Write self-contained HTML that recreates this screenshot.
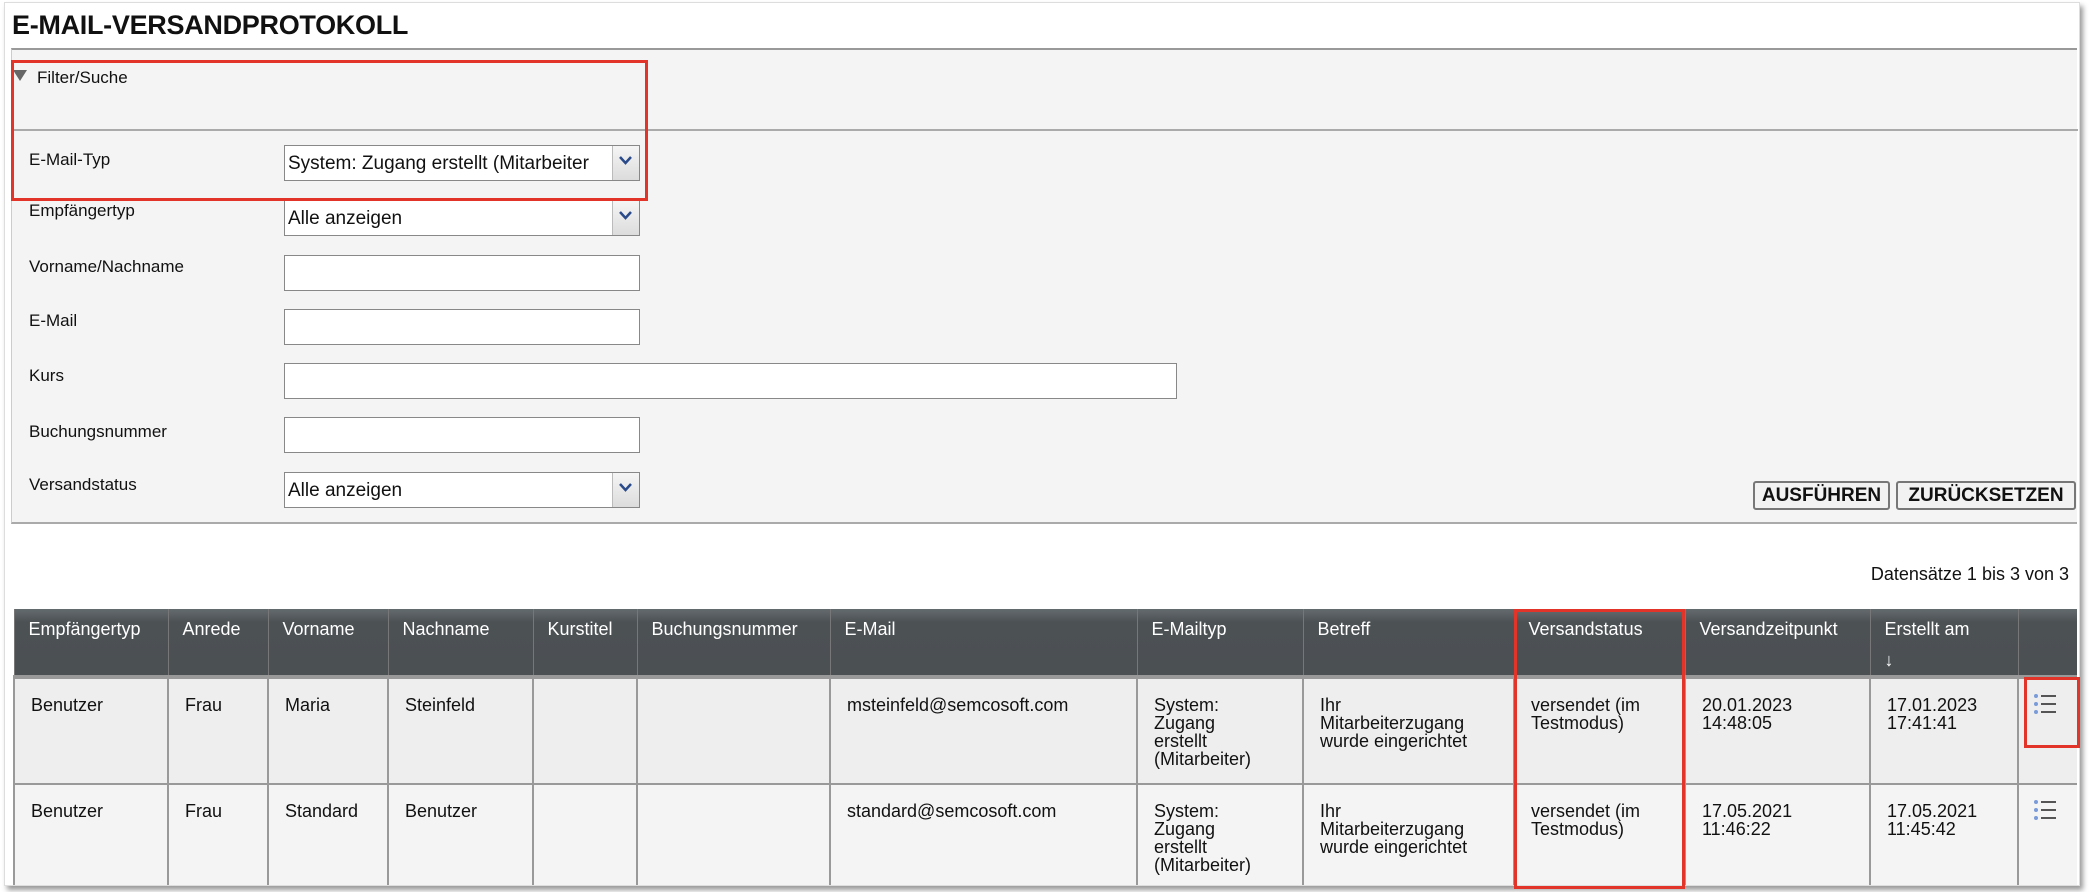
<!DOCTYPE html>
<html><head><meta charset="utf-8"><style>
*{box-sizing:border-box;margin:0;padding:0}
body{width:2090px;height:892px;background:#fff;font-family:"Liberation Sans",Arial,sans-serif;color:#111;position:relative;overflow:hidden}
.abs{position:absolute}
.frame{left:4px;top:2px;width:2076px;height:884px;border:1px solid #ddd;box-shadow:3px 4px 5px #999;background:#fff}
h1{position:absolute;left:12px;top:10px;font-size:27px;font-weight:bold;letter-spacing:-0.3px}
.filter{left:11px;top:48px;width:2066px;height:476px;background:#f4f4f4;border-top:2px solid #999;border-bottom:2px solid #aaa;border-left:1px solid #ccc}
.lbl{position:absolute;left:29px;font-size:17px}
.inp{position:absolute;left:284px;width:356px;height:36px;background:#fff;border:1px solid #888;font-size:19px;padding:7px 3px;font-family:"Liberation Sans",sans-serif;white-space:nowrap;overflow:hidden}
.sel::after{content:"";position:absolute;right:0;top:0;width:26px;height:34px;background:linear-gradient(#f5f5f5,#dcdcdc);border-left:1px solid #bbb}
.chev{position:absolute;right:7px;top:10px;z-index:2}
.btn{position:absolute;top:481px;height:29px;border:2px solid #777;border-radius:3px;background:#f2f2f2;font-weight:bold;font-size:19px;text-align:center;line-height:25px}
.red{position:absolute;border:3px solid #e3342a}
.tw{position:absolute;left:13px;top:609px;width:2064px;height:276px;overflow:hidden}
table{border-collapse:collapse;table-layout:fixed;width:2064px}
th{background:linear-gradient(#646b6e,#4c5154 20%,#4b5053);color:#fff;font-weight:normal;font-size:18px;text-align:left;vertical-align:top;padding:10px 14px 0;height:68px;border-left:1px solid #777;border-bottom:4px solid #999}
td{font-size:18px;vertical-align:top;padding:17px 16px 0;border:2px solid #999;border-top:none;line-height:18px}
tr.r1 td{background:#eeeeee;height:107px}
tr.r2 td{background:#f4f4f4;height:107px}
</style></head><body>
<div class="abs frame"></div>
<h1>E-MAIL-VERSANDPROTOKOLL</h1>
<div class="abs filter">
  <div class="abs" style="left:0;top:79px;width:2066px;height:2px;background:#aaa"></div>
</div>
<div class="abs" style="left:13px;top:70px;width:0;height:0;border-left:7px solid transparent;border-right:7px solid transparent;border-top:11px solid #666"></div>
<div class="abs" style="left:37px;top:68px;font-size:17px">Filter/Suche</div>

<div class="lbl" style="top:150px">E-Mail-Typ</div>
<div class="inp sel" style="top:145px">System: Zugang erstellt (Mitarbeiter<svg class="chev" width="13" height="9" viewBox="0 0 13 9"><path d="M1 1l5.5 6 5.5-6" stroke="#2a4a8a" stroke-width="2.5" fill="none"/></svg></div>
<div class="lbl" style="top:201px">Empfängertyp</div>
<div class="inp sel" style="top:200px">Alle anzeigen<svg class="chev" width="13" height="9" viewBox="0 0 13 9"><path d="M1 1l5.5 6 5.5-6" stroke="#2a4a8a" stroke-width="2.5" fill="none"/></svg></div>
<div class="lbl" style="top:257px">Vorname/Nachname</div>
<div class="inp" style="top:255px"></div>
<div class="lbl" style="top:311px">E-Mail</div>
<div class="inp" style="top:309px"></div>
<div class="lbl" style="top:366px">Kurs</div>
<div class="inp" style="top:363px;width:893px"></div>
<div class="lbl" style="top:422px">Buchungsnummer</div>
<div class="inp" style="top:417px"></div>
<div class="lbl" style="top:475px">Versandstatus</div>
<div class="inp sel" style="top:472px">Alle anzeigen<svg class="chev" width="13" height="9" viewBox="0 0 13 9"><path d="M1 1l5.5 6 5.5-6" stroke="#2a4a8a" stroke-width="2.5" fill="none"/></svg></div>
<div class="btn" style="left:1753px;width:137px">AUSFÜHREN</div>
<div class="btn" style="left:1896px;width:180px">ZURÜCKSETZEN</div>

<div class="abs" style="right:21px;top:564px;font-size:18px">Datensätze 1 bis 3 von 3</div>

<div class="tw"><table>
<colgroup><col style="width:154px"><col style="width:100px"><col style="width:120px"><col style="width:145px"><col style="width:104px"><col style="width:193px"><col style="width:307px"><col style="width:166px"><col style="width:211px"><col style="width:171px"><col style="width:185px"><col style="width:148px"><col style="width:60px"></colgroup>
<tr><th>Empfängertyp</th><th>Anrede</th><th>Vorname</th><th>Nachname</th><th>Kurstitel</th><th>Buchungsnummer</th><th>E-Mail</th><th>E-Mailtyp</th><th>Betreff</th><th>Versandstatus</th><th>Versandzeitpunkt</th><th>Erstellt am<br><span style="display:inline-block;margin-top:10px">↓</span></th><th></th></tr>
<tr class="r1"><td>Benutzer</td><td>Frau</td><td>Maria</td><td>Steinfeld</td><td></td><td></td><td>msteinfeld@semcosoft.com</td><td>System:<br>Zugang<br>erstellt<br>(Mitarbeiter)</td><td>Ihr<br>Mitarbeiterzugang<br>wurde eingerichtet</td><td>versendet (im<br>Testmodus)</td><td>20.01.2023<br>14:48:05</td><td>17.01.2023<br>17:41:41</td><td style="padding:14px 14px 0"><svg width="24" height="22" viewBox="0 0 24 22"><g fill="#7a9ad8"><circle cx="3" cy="3" r="2"/><circle cx="3" cy="11" r="2"/><circle cx="3" cy="19" r="2"/></g><g stroke="#555" stroke-width="2"><path d="M8 3h15M8 11h15M8 19h15"/></g></svg></td></tr>
<tr class="r2"><td>Benutzer</td><td>Frau</td><td>Standard</td><td>Benutzer</td><td></td><td></td><td>standard@semcosoft.com</td><td>System:<br>Zugang<br>erstellt<br>(Mitarbeiter)</td><td>Ihr<br>Mitarbeiterzugang<br>wurde eingerichtet</td><td>versendet (im<br>Testmodus)</td><td>17.05.2021<br>11:46:22</td><td>17.05.2021<br>11:45:42</td><td style="padding:14px 14px 0"><svg width="24" height="22" viewBox="0 0 24 22"><g fill="#7a9ad8"><circle cx="3" cy="3" r="2"/><circle cx="3" cy="11" r="2"/><circle cx="3" cy="19" r="2"/></g><g stroke="#555" stroke-width="2"><path d="M8 3h15M8 11h15M8 19h15"/></g></svg></td></tr>
</table></div>

<div class="red" style="left:11px;top:60px;width:637px;height:141px"></div>
<div class="red" style="left:1514px;top:609px;width:171px;height:280px"></div>
<div class="red" style="left:2024px;top:677px;width:56px;height:71px"></div>
</body></html>
